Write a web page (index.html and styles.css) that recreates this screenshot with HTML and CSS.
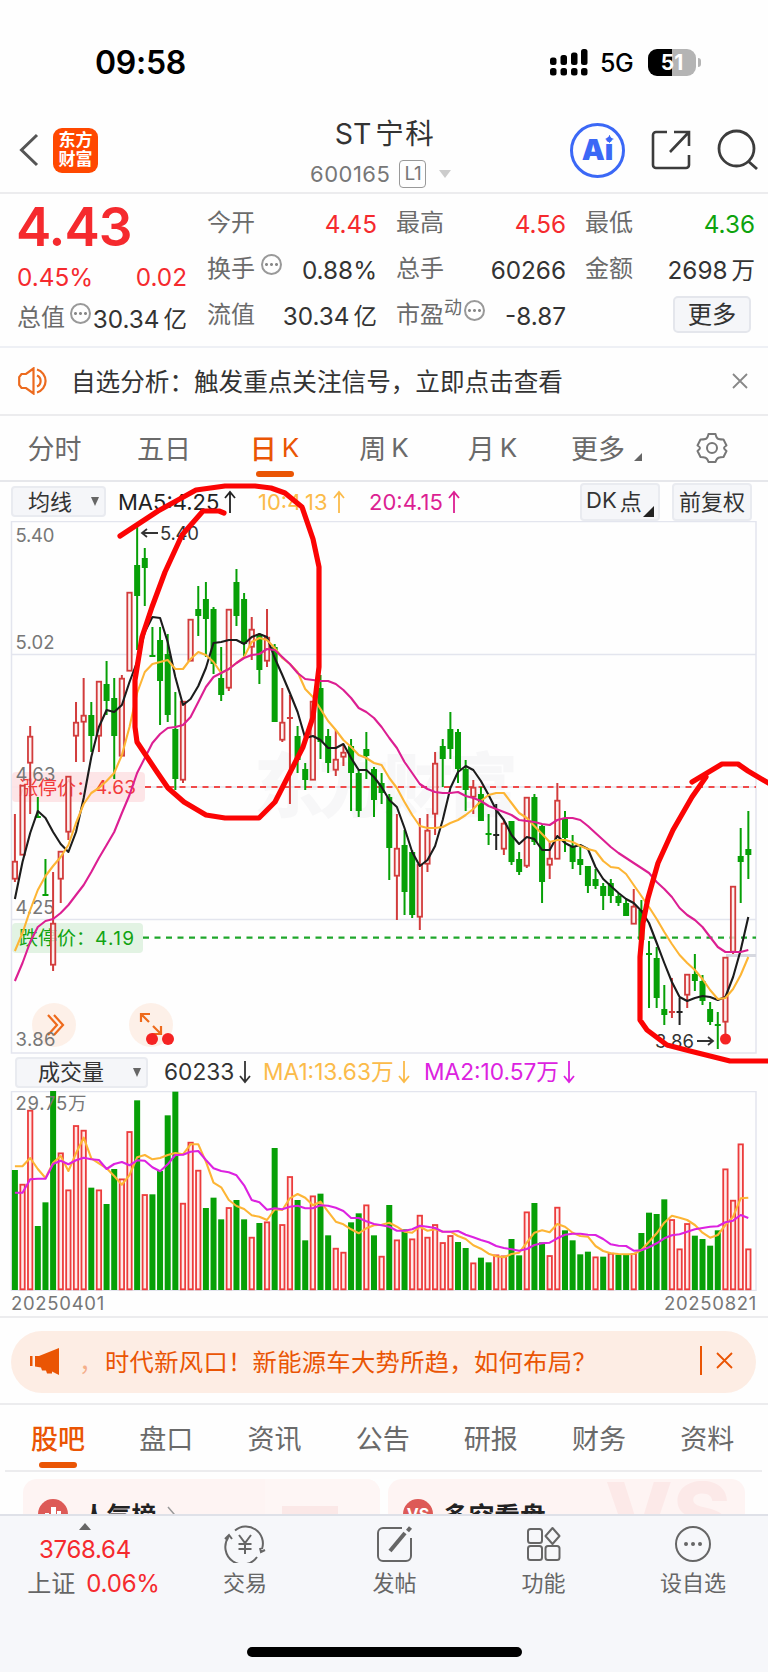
FILE: index.html
```html
<!DOCTYPE html>
<html lang="zh-CN">
<head>
    <meta charset="UTF-8">
    <meta name="viewport" content="width=device-width, initial-scale=1.0">
    <title>ST宁科 600165</title>
    <link rel="stylesheet" href="styles.css">
</head>
<body>
    <div class="status-bar">
        <span class="time">09:58</span>
        <div class="status-right">
            <svg class="signal" width="38" height="27" viewBox="0 0 38 27">
                <rect x="0" y="8.500" width="6.500" height="7.500" rx="2.500"/>
                <rect x="10.500" y="6" width="6.500" height="10" rx="2.500"/>
                <rect x="21" y="3.500" width="6.500" height="12.500" rx="2.500"/>
                <rect x="31" y="0" width="6.500" height="16" rx="2.500"/>
                <rect x="0" y="19" width="6.500" height="7.500" rx="2.500"/>
                <rect x="10.500" y="19" width="6.500" height="7.500" rx="2.500"/>
                <rect x="21" y="19" width="6.500" height="7.500" rx="2.500"/>
                <rect x="31" y="19" width="6.500" height="7.500" rx="2.500"/>
            </svg>
            <span class="network">5G</span>
            <span class="battery">51</span>
            <span class="battery-tip"></span>
        </div>
    </div>

    <header class="header">
        <div class="header-left">
            <svg width="20" height="34" viewBox="0 0 20 34" fill="none" stroke="#555" stroke-width="3">
                <path d="M18 2 2.500 17 18 32"/>
            </svg>
            <span class="logo">东方<br>财富</span>
        </div>
        <div class="header-title">
            <h1>ST<span class="cjk">宁科</span></h1>
            <div class="code">600165<span class="level">L1</span><span class="caret"></span></div>
        </div>
        <div class="header-right">
            <span class="ai">Ai<i></i></span>
            <svg width="40" height="40" viewBox="0 0 40 40" fill="none" stroke="#3c3c3c" stroke-width="2.600">
                <path d="M16 2H5a3 3 0 0 0-3 3v30a3 3 0 0 0 3 3h30a3 3 0 0 0 3-3V25M23 2h15v14M38 2 19 22"/>
            </svg>
            <svg width="42" height="42" viewBox="0 0 42 42" fill="none" stroke="#3c3c3c" stroke-width="2.800">
                <circle cx="19.500" cy="19.500" r="17.500"/><path d="M31 32l9 8"/>
            </svg>
        </div>
    </header>

    <section class="quote">
        <div class="quote-main">
            <div class="price">4.43</div>
            <div class="row red change"><span>0.45%</span><span>0.02</span></div>
            <div class="row"><label>总值<i class="info"></i></label><span>30.34<b>亿</b></span></div>
        </div>
        <div class="quote-grid">
            <div class="row"><label>今开</label><span class="red">4.45</span></div>
            <div class="row"><label>最高</label><span class="red">4.56</span></div>
            <div class="row"><label>最低</label><span class="green">4.36</span></div>
            <div class="row"><label>换手<i class="info wide"></i></label><span>0.88%</span></div>
            <div class="row"><label>总手</label><span>60266</span></div>
            <div class="row"><label>金额</label><span>2698<b>万</b></span></div>
            <div class="row"><label>流值</label><span>30.34<b>亿</b></span></div>
            <div class="row"><label>市盈<sup>动</sup><i class="info tight"></i></label><span>-8.87</span></div>
            <div class="row more"><button>更多</button></div>
        </div>
    </section>

    <section class="notice">
        <svg width="34" height="28" viewBox="0 0 34 28" fill="none" stroke="#ec6a1e" stroke-width="2.200">
            <path d="M15.500 1.500 8 7H3.500L1.200 10v8l2.300 3H8l7.500 5.500zM19 8.500a6 6 0 0 1 0 11M19 2.500a12 12 0 0 1 0 23"/>
        </svg>
        <p>自选分析：触发重点关注信号，立即点击查看</p>
        <svg class="close" width="16" height="16" viewBox="0 0 16 16" stroke="#888" stroke-width="1.800">
            <path d="M1 1l14 14M15 1 1 15"/>
        </svg>
    </section>

    <nav class="period-tabs">
        <a>分时</a>
        <a>五日</a>
        <a class="active">日<span>K</span></a>
        <a>周<span>K</span></a>
        <a>月<span>K</span></a>
        <a>更多<i class="corner"></i></a>
        <a>
            <svg width="32" height="32" viewBox="0 0 32 32" fill="none" stroke="#777" stroke-width="2">
                <path d="M12.500 2h7q1 4.500 3 5t5 .5l3 6q-2.500 1.500-2.500 2.500t2.500 3l-3 6q-3 0-5 .7t-3 4.300h-7q-1-3.600-3-4.300t-5-.7l-3-6q2.500-2 2.500-3t-2.500-2.500l3-6q3 0 5-.5t3-5z" stroke-linejoin="round"/>
                <circle cx="16" cy="16" r="5"/>
            </svg>
        </a>
    </nav>

    <div class="toolbar price-toolbar">
        <span class="select">均线<i></i></span>
        <span class="ma ma5">MA5:4.25<svg class="arrow"><use href="#up"/></svg></span>
        <span class="ma ma10">10:4.13<svg class="arrow"><use href="#up"/></svg></span>
        <span class="ma ma20">20:4.15<svg class="arrow"><use href="#up"/></svg></span>
        <span class="chip dk">DK<b>点</b><i class="corner"></i></span>
        <span class="chip">前复权</span>
    </div>

    <svg class="price-chart" width="768" height="533" viewBox="0 521 768 533">
        <defs>
            <symbol id="up" viewBox="0 0 12 24"><path d="M6 23V2M1 8l5-6 5 6" fill="none" stroke="currentColor" stroke-width="1.800"/></symbol>
            <symbol id="down" viewBox="0 0 12 24"><path d="M6 1v21M1 16l5 6 5-6" fill="none" stroke="currentColor" stroke-width="1.800"/></symbol>
        </defs>
        <text class="watermark" x="254" y="812" textLength="264">东方财富</text>
        <path class="grid" d="M11.500 521.500H756V1053H11.500zM11.500 654.500H756M11.500 787H756M11.500 919.500H756"/>
        <rect class="limit-up-bg" x="12" y="772" width="133" height="30" rx="4"/>
        <rect class="limit-down-bg" x="12" y="923" width="131" height="30" rx="4"/>
        <path class="dash red-line" d="M145 787H756"/>
        <path class="dash green-line" d="M143 937.700H756"/>
        <g class="axis">
            <text x="15.500" y="542" textLength="39">5.40</text>
            <text x="15.500" y="648.500" textLength="39">5.02</text>
            <text x="15.500" y="781" textLength="40">4.63</text>
            <text x="15.500" y="913.500" textLength="39">4.25</text>
        </g>
        <text class="limit up" x="19" y="794.500">涨停价：</text>
        <text class="limit up" x="95" y="794" textLength="41">4.63</text>
        <text class="limit down" x="19" y="945">跌停价：</text>
        <text class="limit down" x="95" y="945" textLength="39">4.19</text>
        <path d="M726 955.500H756" stroke="#d6d8e0" stroke-width="3"/>
        <g id="candles"></g>
        <g id="priceLines" class="lines"></g>
        <g class="mark">
            <text x="160" y="539.500" textLength="39">5.40</text>
            <path d="M158 533h-15M147 529l-5 4 5 4"/>
            <text x="655" y="1048" textLength="39">3.86</text>
            <path d="M697 1041h15M708 1037l5 4-5 4"/>
        </g>
        <circle class="round-bg" cx="54" cy="1025" r="22"/>
        <path class="round-icon" d="M48 1015l9 10-9 10M54 1015l9 10-9 10"/>
        <circle class="round-bg" cx="151" cy="1025" r="22"/>
        <path class="round-icon" d="M141 1022v-8h9M141 1014l8 8M153 1026l8 8M161 1026v8h-9"/>
        <circle class="dot" cx="152" cy="1039" r="6"/>
        <circle class="dot" cx="168" cy="1039" r="6"/>
        <circle class="dot" cx="725.500" cy="1039" r="5.500"/>
        <g class="axis"><text x="15.500" y="1046" textLength="40">3.86</text></g>
    </svg>

    <div class="toolbar volume-toolbar">
        <span class="select">成交量<i></i></span>
        <span class="ma">60233<svg class="arrow"><use href="#down"/></svg></span>
        <span class="ma vol1">MA1:13.63万<svg class="arrow"><use href="#down"/></svg></span>
        <span class="ma vol2">MA2:10.57万<svg class="arrow"><use href="#down"/></svg></span>
    </div>

    <svg class="volume-chart" width="768" height="200" viewBox="0 1091 768 200">
        <path class="grid" d="M11.500 1091.500H756V1290.500H11.500z"/>
        <g id="volumes"></g>
        <g class="axis"><text x="15.500" y="1110" textLength="71">29.75万</text></g>
        <g id="volumeLines" class="lines"></g>
    </svg>
    <div class="dates"><span>20250401</span><span>20250821</span></div>

    <section class="banner-wrap">
        <div class="banner">
            <svg width="30" height="27" viewBox="0 0 30 27" fill="#ea5504">
                <path d="M0 8h2.500v10H0zM5 8h4L29 0v27l-7-3.500v2h-5l-1-3h-4l-1-3-6-1z"/>
            </svg>
            <span class="tail">，</span>
            <p>时代新风口！新能源车大势所趋，如何布局？</p>
            <svg class="close" width="17" height="17" viewBox="0 0 17 17" stroke="#ea5504" stroke-width="1.800">
                <path d="M1 1l15 15M16 1 1 16"/>
            </svg>
        </div>
    </section>

    <nav class="info-tabs">
        <a class="active">股吧</a><a>盘口</a><a>资讯</a><a>公告</a><a>研报</a><a>财务</a><a>资料</a>
    </nav>

    <section class="cards">
        <div class="card">
            <span class="badge"><svg width="16" height="16" viewBox="0 0 16 16" fill="#fff"><path d="M0 7h4v9H0zM6 1h5v15H6zM12 5h4v11h-4z"/></svg></span>
            <b>人气榜</b>
            <svg width="8" height="16" viewBox="0 0 8 16" fill="none" stroke="#999" stroke-width="1.500"><path d="M1 1l6 7-6 7"/></svg>
            <i class="deco podium"></i>
        </div>
        <div class="card">
            <span class="badge">VS</span>
            <b class="wide">多空看盘</b>
            <i class="deco versus">VS</i>
        </div>
    </section>

    <footer class="bottom-bar">
        <div class="nav">
            <div class="index">
                <i></i>
                <strong>3768.64</strong>
                <p>上证<span>0.06%</span></p>
            </div>
            <div class="nav-item">
                <svg width="42" height="38" viewBox="0 0 42 38" fill="none" stroke="#666" stroke-width="2">
                    <path d="M11 5.500A17 17 0 0 1 38 24M33 32A17 17 0 0 1 4.500 12M1 14l4-4 3 4M41 25l-4 2-1-4M15 10l6 8 6-8M14.500 19h13M14.500 24h13M21 18v11"/>
                </svg>
                <span>交易</span>
            </div>
            <div class="nav-item">
                <svg width="36" height="38" viewBox="0 0 36 38" fill="none" stroke="#666" stroke-width="2">
                    <path d="M25 3H6a5 5 0 0 0-5 5v23a5 5 0 0 0 5 5h23a5 5 0 0 0 5-5V13"/>
                    <path d="M13 26l15-18" stroke-width="4"/><path d="M30.500 6l3-3.500" stroke-width="4"/>
                </svg>
                <span>发帖</span>
            </div>
            <div class="nav-item">
                <svg width="34" height="36" viewBox="0 0 34 36" fill="none" stroke="#666" stroke-width="2">
                    <rect x="1" y="3" width="14" height="14" rx="2.500"/>
                    <rect x="1" y="20" width="14" height="14" rx="2.500"/>
                    <rect x="18.500" y="20" width="14" height="14" rx="2.500"/>
                    <path d="M25.500 2l7 8-7 8-7-8z" stroke-linejoin="round"/>
                </svg>
                <span>功能</span>
            </div>
            <div class="nav-item">
                <svg width="38" height="38" viewBox="0 0 38 38" fill="none" stroke="#666" stroke-width="2">
                    <circle cx="19" cy="19" r="17"/>
                    <path d="M12 19h.01M19 19h.01M26 19h.01" stroke-width="4" stroke-linecap="round"/>
                </svg>
                <span>设自选</span>
            </div>
        </div>
        <div class="home-indicator"></div>
    </footer>

    <svg class="doodle" width="768" height="1672" viewBox="0 0 768 1672">
        <path d="M120 536 158 511 196 490 225 486H255L271 488 285 493 302 507 313 539 319 567V667L313 717 303 747 275 802 259 818H225L206 815 184 802 168 788 157 772 137 742 135 727V680L142 637 152 607 165 572 182 535 203 511H219L224 513"/>
        <path d="M692 782 722 764H738L748 771 770 784M706 777 692 797 673 830 658 863 648 898 643 923 640 957V1020L647 1030 667 1045 690 1051 730 1061H770"/>
    </svg>

    <script src="chart.js"></script>
</body>
</html>
```
FILE: chart.js
```js
const START = 14.9;
const STEP = 7.64;
const x = i => START + i * STEP;

const RED = '#d23c3c';
const GREEN = '#07a007';
const BLACK = '#222';

// [type, high, low, bodyTop, bodyBottom]
const candles = [
    ['r', 814, 882, 861, 879], ['r', 785, 855, 785, 855], ['r', 726, 814, 736, 763], ['g', 797, 818, 817, 818],
    ['g', 859, 896, 895, 896], ['r', 872, 971, 923, 965], ['r', 851, 903, 851, 879], ['r', 776, 840, 776, 832],
    ['r', 702, 762, 722, 736], ['r', 678, 762, 715, 722], ['g', 702, 752, 715, 736], ['r', 681, 752, 681, 736],
    ['g', 661, 715, 684, 701], ['g', 678, 779, 698, 736], ['r', 675, 756, 678, 756], ['r', 592, 671, 592, 671],
    ['g', 525, 650, 565, 596], ['g', 548, 606, 558, 568], ['g', 627, 657, 656, 657], ['g', 627, 725, 640, 681],
    ['g', 634, 722, 654, 715], ['g', 692, 790, 729, 779], ['r', 701, 783, 701, 780], ['r', 619, 661, 619, 661],
    ['g', 586, 636, 609, 616], ['g', 582, 657, 599, 619], ['g', 607, 674, 609, 664], ['g', 647, 701, 678, 695],
    ['r', 609, 691, 609, 688], ['g', 569, 626, 582, 616], ['g', 593, 656, 599, 644], ['r', 617, 660, 629, 647],
    ['g', 633, 684, 634, 670], ['r', 609, 667, 637, 661], ['g', 644, 722, 647, 722], ['r', 688, 742, 722, 740],
    ['r', 695, 804, 718, 719], ['g', 726, 773, 736, 760], ['g', 763, 790, 769, 780], ['r', 701, 780, 701, 780],
    ['g', 675, 759, 688, 742], ['g', 729, 773, 736, 763], ['r', 730, 776, 759, 770], ['r', 745, 766, 752, 757],
    ['g', 739, 811, 746, 773], ['g', 770, 817, 773, 811], ['g', 732, 779, 749, 756], ['g', 767, 817, 769, 800],
    ['g', 773, 804, 783, 793], ['g', 794, 880, 797, 848], ['r', 814, 920, 848, 876], ['g', 830, 915, 845, 892],
    ['g', 850, 918, 852, 915], ['r', 818, 930, 864, 917], ['r', 814, 872, 830, 864], ['r', 752, 835, 763, 814],
    ['g', 739, 787, 746, 759], ['g', 712, 759, 729, 749], ['g', 729, 783, 732, 769], ['g', 760, 811, 769, 790],
    ['r', 780, 814, 787, 797], ['g', 787, 821, 794, 821], ['g', 814, 845, 834, 835], ['k', 804, 850, 835, 836],
    ['r', 820, 855, 823, 849], ['g', 821, 865, 821, 862], ['g', 852, 875, 859, 872], ['r', 797, 868, 797, 866],
    ['g', 794, 845, 797, 842], ['g', 825, 903, 826, 882], ['r', 842, 879, 858, 865], ['r', 783, 859, 800, 859],
    ['g', 811, 852, 818, 838], ['g', 835, 869, 847, 862], ['g', 845, 875, 859, 865], ['g', 866, 893, 866, 886],
    ['g', 869, 889, 879, 886], ['g', 883, 910, 886, 896], ['g', 879, 903, 883, 896], ['g', 893, 906, 896, 903],
    ['g', 899, 916, 903, 916], ['r', 889, 924, 906, 924], ['g', 900, 940, 910, 940], ['g', 941, 1008, 954, 955],
    ['g', 947, 1008, 958, 998], ['g', 985, 1025, 1009, 1015], ['r', 978, 1018, 1012, 1013], ['k', 998, 1025, 1012, 1013],
    ['r', 974, 1008, 974, 995], ['g', 954, 991, 974, 981], ['g', 975, 1005, 981, 1001], ['g', 1002, 1025, 1009, 1022],
    ['g', 1012, 1049, 1025, 1026], ['r', 957, 1037, 957, 1022], ['r', 886, 954, 886, 952], ['g', 828, 903, 856, 862],
    ['g', 811, 879, 849, 855]
];

const ma5 = [899, 862, 833, 811, 818, 832, 844, 852, 832, 798, 757, 727, 710, 712, 705, 682, 662, 632, 617, 618,
    642, 677, 705, 699, 686, 668, 643, 642, 640, 640, 644, 637, 634, 637, 658, 675, 693, 712, 738, 736,
    740, 748, 748, 744, 758, 770, 770, 777, 787, 800, 807, 828, 852, 866, 860, 846, 820, 788, 772, 766,
    770, 781, 795, 810, 820, 835, 844, 837, 839, 850, 850, 836, 843, 847, 845, 849, 867, 879, 886, 893,
    899, 903, 911, 923, 943, 963, 982, 997, 1001, 998, 996, 997, 1000, 997, 977, 950, 917];

const ma10 = [951, 933, 910, 890, 876, 866, 857, 845, 823, 804, 793, 788, 781, 773, 755, 727, 693, 672, 664, 662,
    660, 669, 669, 659, 652, 655, 662, 673, 669, 663, 657, 642, 638, 640, 648, 658, 664, 672, 689, 697,
    709, 721, 730, 740, 747, 755, 758, 763, 765, 778, 788, 802, 815, 826, 828, 828, 827, 823, 820, 815,
    809, 801, 795, 793, 793, 803, 813, 818, 826, 834, 842, 840, 840, 842, 846, 849, 851, 861, 867, 868,
    874, 885, 896, 907, 919, 932, 944, 955, 963, 970, 979, 990, 999, 998, 989, 975, 957];

const ma20 = [981, 963, 942, 927, 921, 919, 913, 905, 895, 885, 872, 858, 845, 832, 813, 795, 773, 758, 743, 734,
    728, 727, 725, 717, 702, 687, 677, 673, 669, 663, 658, 655, 654, 649, 650, 657, 664, 673, 679, 680,
    681, 681, 684, 690, 698, 708, 712, 718, 727, 738, 748, 762, 773, 784, 789, 792, 793, 793, 792, 796,
    798, 801, 806, 809, 812, 815, 820, 821, 822, 824, 825, 820, 818, 818, 820, 826, 833, 840, 847, 853,
    858, 863, 868, 873, 882, 889, 897, 908, 915, 920, 927, 937, 947, 952, 952, 952, 950];

const BASE = 720;
const volY = v => 1050 + v / 3;

const volumes = 'g360 r402 r180 g528 g457 g123 r308 r419 r226 r240 g413 r419 g462 g357 r386 r244 g151 r433 g433 g363 ' +
    'g196 g125 r459 r276 r360 g474 g443 g508 r472 g450 g508 r561 g519 r515 g294 r523 r379 g450 g571 r437 ' +
    'g431 g556 r594 r606 g517 g490 r464 g556 r618 g465 r569 g538 r566 r495 r561 r523 r577 r556 g576 g594 ' +
    'r638 g623 g637 r614 r617 g567 g616 r485 g459 g577 r616 r471 g541 g571 g613 g605 r620 g620 r609 g614 ' +
    'g614 r610 g549 g488 g492 g448 r508 r596 r520 g557 g567 g587 g541 r356 r450 r281 r596';

const volMa1 = [349, 349, 324, 357, 384, 338, 318, 363, 310, 263, 325, 340, 355, 378, 404, 375, 322, 315, 328, 324,
    315, 309, 313, 283, 283, 335, 398, 412, 450, 468, 477, 496, 500, 510, 478, 480, 445, 432, 443, 466,
    455, 485, 515, 523, 538, 550, 535, 526, 524, 518, 530, 545, 548, 530, 542, 538, 545, 545, 558, 567,
    586, 596, 611, 619, 622, 612, 608, 578, 548, 541, 547, 522, 530, 548, 558, 560, 588, 603, 610, 612,
    613, 612, 600, 575, 550, 518, 497, 503, 510, 525, 548, 563, 555, 525, 500, 445, 443];

const volMa2 = [428, 428, 388, 386, 386, 342, 332, 343, 331, 323, 328, 330, 357, 342, 336, 346, 331, 332, 352, 364,
    343, 315, 314, 305, 303, 330, 355, 363, 367, 376, 406, 450, 457, 479, 475, 478, 470, 467, 475, 475,
    466, 467, 473, 483, 504, 504, 514, 522, 526, 530, 542, 542, 538, 527, 530, 534, 545, 545, 543, 554,
    562, 570, 577, 588, 594, 598, 602, 597, 585, 580, 578, 565, 554, 551, 551, 554, 555, 567, 583, 587,
    588, 602, 601, 592, 580, 565, 556, 553, 545, 538, 534, 530, 529, 517, 512, 495, 504];

function line(values, color, map = v => v) {
    const points = values.map((v, i) => `${x(i).toFixed(1)},${map(v).toFixed(1)}`).join(' ');
    return `<polyline points="${points}" stroke="${color}"/>`;
}

function drawCandle([type, high, low, top, bottom], i) {
    const color = type === 'r' ? RED : type === 'g' ? GREEN : BLACK;
    const cx = x(i);
    if (bottom - top < 2) {
        return `<path d="M${cx} ${high}V${low}M${cx - 3} ${top}h6" stroke="${color}" stroke-width="2"/>`;
    }
    if (type === 'r') {
        return `<path d="M${cx} ${high}V${top}M${cx} ${bottom}V${low}" stroke="${color}" stroke-width="2"/>` +
            `<rect x="${cx - 2.2}" y="${top + 0.7}" width="4.4" height="${bottom - top - 1}" fill="#fdeeee" fill-opacity="0.8" stroke="${color}" stroke-width="1.8"/>`;
    }
    return `<path d="M${cx} ${high}V${low}" stroke="${color}" stroke-width="2"/>` +
        `<rect x="${cx - 3}" y="${top}" width="6" height="${bottom - top}" fill="${color}"/>`;
}

function drawVolume(item, i) {
    const top = volY(Number(item.slice(1)));
    const height = volY(BASE) - top;
    if (item[0] === 'g') {
        return `<rect x="${x(i) - 3}" y="${top}" width="6" height="${height}" fill="${GREEN}"/>`;
    }
    return `<rect x="${x(i) - 2.2}" y="${top + 0.7}" width="4.4" height="${height - 1.4}" fill="#ffeaea" stroke="#ec3c3c" stroke-width="1.8"/>`;
}

document.getElementById('candles').innerHTML = candles.map(drawCandle).join('');
document.getElementById('priceLines').innerHTML =
    line(ma5, '#1c1c1c') + line(ma10, '#fdb535') + line(ma20, '#dc1f92');
document.getElementById('volumes').innerHTML = volumes.split(' ').map(drawVolume).join('');
document.getElementById('volumeLines').innerHTML =
    line(volMa1, '#fdb535', volY) + line(volMa2, '#dc22e0', volY);
```
FILE: styles.css
```css
* {
    box-sizing: border-box;
}
body {
    margin: 0;
    width: 768px;
    height: 1672px;
    position: relative;
    overflow: hidden;
    background: #fefefe;
    color: #333;
    font-family: Inter, "Noto Sans CJK SC", sans-serif;
}
h1, p {
    margin: 0;
}
svg {
    display: block;
    flex: none;
}
b, i {
    font-weight: inherit;
    font-style: normal;
}
.red {
    color: #f52a2e;
}
.green {
    color: #0ea30e;
}

/* status bar */
.status-bar {
    height: 110px;
    padding: 15px 67px 0 95px;
    display: flex;
    align-items: center;
    justify-content: space-between;
    color: #000;
}
.time {
    font-size: 32px;
    font-weight: 600;
    letter-spacing: -0.3px;
}
.status-right {
    display: flex;
    align-items: center;
}
.network {
    margin-left: 12px;
    width: 48px;
    font-size: 25px;
    font-weight: 500;
    letter-spacing: -0.5px;
}
.battery {
    width: 48px;
    height: 27px;
    border-radius: 9px;
    background: linear-gradient(90deg, #000 51%, #b4b4b4 51%);
    color: #fff;
    font-size: 21px;
    font-weight: 700;
    line-height: 27px;
    text-align: center;
}
.battery-tip {
    width: 3px;
    height: 9px;
    margin-left: 2px;
    border-radius: 0 3px 3px 0;
    background: #b4b4b4;
}

/* header */
.header {
    height: 84px;
    padding: 0 9px 0 19px;
    display: grid;
    grid-template-columns: 1fr 200px 1fr;
    border-bottom: 2px solid #ececee;
}
.header-left,
.header-right {
    display: flex;
    align-items: center;
    height: 80px;
}
.header-left {
    gap: 14px;
}
.header-right {
    justify-content: flex-end;
    gap: 26px;
}
.logo {
    width: 45px;
    height: 45px;
    padding-top: 3px;
    border-radius: 9px;
    background: #ff4800;
    color: #fff;
    font-size: 17px;
    font-weight: 700;
    line-height: 19px;
    text-align: center;
}
.header-title {
    text-align: center;
    margin-left: -8px;
}
.header-title h1 {
    margin-top: 4px;
    font-size: 28.5px;
    font-weight: 400;
    line-height: 40px;
}
.cjk {
    margin-left: 4px;
    letter-spacing: 1.5px;
}
.code {
    display: flex;
    align-items: center;
    height: 40px;
    margin-left: 29px;
    color: #777;
    font-size: 22px;
    letter-spacing: 0.5px;
}
.level {
    width: 27px;
    height: 28px;
    margin: 0 13px 0 9px;
    border: 1.5px solid #999;
    border-radius: 4px;
    font-size: 19px;
    line-height: 26px;
    letter-spacing: -0.5px;
}
.caret {
    border: 6.5px solid transparent;
    border-top: 8px solid #ccc;
    border-bottom: 0;
}
.ai {
    position: relative;
    width: 55px;
    height: 55px;
    border: 3px solid #3b68f6;
    border-radius: 50%;
    color: #3b68f6;
    font-size: 29px;
    font-weight: 900;
    line-height: 48px;
    text-align: center;
}
.ai i {
    position: absolute;
    right: 8px;
    top: 9px;
    width: 9px;
    height: 9px;
    background: #3b68f6;
    clip-path: polygon(50% 0, 65% 35%, 100% 50%, 65% 65%, 50% 100%, 35% 65%, 0 50%, 35% 35%);
}

/* quote */
.quote {
    display: flex;
    height: 154px;
    padding: 7px 12px 0 17px;
    border-bottom: 2px solid #eef0f5;
    font-size: 24.3px;
}
.quote-main {
    width: 170px;
    margin-right: 20px;
}
.price {
    height: 52px;
    margin-left: -1px;
    color: #f52a2e;
    font-size: 53px;
    font-weight: 600;
    line-height: 52px;
    letter-spacing: -1px;
}
.row {
    display: flex;
    align-items: center;
    justify-content: space-between;
    height: 46px;
    line-height: 30px;
    white-space: nowrap;
}
.quote-main .row {
    height: 38px;
}
.quote-main .change {
    height: 47px;
}
.row b {
    margin-left: 4px;
    font-size: 23.5px;
}
.row label {
    display: flex;
    align-items: center;
    margin-top: -3px;
    color: #6b6b6b;
    font-size: 24px;
}
.quote-grid {
    display: grid;
    grid-template-columns: 170px 170px 170px;
    column-gap: 19px;
    align-content: start;
}
.info {
    width: 21px;
    height: 21px;
    margin: -8px 0 0 5px;
    border: 2px solid #999;
    border-radius: 50%;
    background: radial-gradient(circle, #888 1.2px, transparent 1.7px) center / 5px 5px repeat-x;
}
.info.wide {
    margin-left: 6px;
}
.info.tight {
    margin-left: 2px;
}
.row sup {
    margin-top: -14px;
    font-size: 18px;
    line-height: 18px;
}
.row.more {
    justify-content: flex-end;
}
.more button {
    width: 78px;
    height: 37px;
    margin: -4px 4px 0 0;
    padding: 0;
    border: 2px solid #e4e6ec;
    border-radius: 5px;
    background: #f5f6f9;
    color: #333;
    font: inherit;
    line-height: 32px;
}

/* notice */
.notice {
    display: flex;
    align-items: center;
    height: 68px;
    padding: 0 20px 0 18px;
    border-bottom: 2px solid #ececee;
}
.notice p {
    margin: -2px auto 0 19px;
    font-size: 24.6px;
}

/* tabs */
.period-tabs {
    display: grid;
    grid-template-columns: 109px 110px 111px 108px 109px 109px 112px;
    height: 66px;
    border-bottom: 2px solid #e6e7eb;
    color: #6a6a6a;
    font-size: 27px;
}
.period-tabs a {
    position: relative;
    display: flex;
    align-items: center;
    justify-content: center;
    padding-bottom: 1px;
}
.period-tabs span {
    margin-left: 5px;
    font-size: 26px;
    font-weight: 400;
}
.active {
    color: #ea5504;
    font-weight: 500;
}
.active::after {
    content: "";
    position: absolute;
    left: 50%;
    bottom: 3px;
    width: 38px;
    height: 6px;
    margin-left: -19px;
    border-radius: 3px;
    background: #ea5504;
}
.corner {
    border-left: 8px solid transparent;
    border-bottom: 8px solid #666;
}
.period-tabs .corner {
    margin: 18px -10px 0 9px;
}

/* toolbars */
.toolbar {
    display: flex;
    align-items: center;
    height: 39px;
    font-size: 22px;
    white-space: nowrap;
}
.price-toolbar {
    padding: 0 16px 0 11px;
}
.select {
    display: flex;
    align-items: center;
    justify-content: space-between;
    width: 95px;
    height: 31px;
    padding: 0 5px 0 15px;
    border: 2px solid #e9ebf0;
    border-radius: 4px;
    background: #f5f6f9;
    line-height: 24px;
}
.select i {
    border: 4.5px solid transparent;
    border-top: 9px solid #666;
    border-bottom: 0;
}
.ma {
    display: flex;
    align-items: center;
    line-height: 28px;
}
.arrow {
    width: 12px;
    height: 24px;
    margin-left: 5px;
}
.ma5 {
    width: 140px;
    margin-left: 12px;
    color: #222;
}
.ma10 {
    width: 111px;
    color: #fbbb4a;
}
.ma20 {
    color: #dc1f92;
}
.chip {
    display: flex;
    align-items: center;
    justify-content: center;
    width: 80px;
    height: 38px;
    padding-bottom: 3px;
    border: 2px solid #e9ebf0;
    border-radius: 4px;
    background: #f5f6f9;
}
.dk {
    position: relative;
    justify-content: flex-start;
    padding-left: 4px;
    margin: 0 12px 0 auto;
}
.dk b {
    margin-left: 3px;
}
.dk .corner {
    position: absolute;
    right: 4px;
    bottom: 2px;
    border-left-width: 11px;
    border-bottom: 11px solid #222;
}
.volume-toolbar {
    height: 37px;
    padding-left: 15px;
    padding-bottom: 1px;
    font-size: 22.700px;
}
.volume-toolbar .select {
    width: 133px;
    padding-left: 21px;
    margin-right: 16px;
    font-size: 22px;
}
.volume-toolbar .ma {
    width: 99px;
}
.volume-toolbar .vol1 {
    width: 161px;
    color: #fbbb4a;
}
.volume-toolbar .vol2 {
    width: auto;
    color: #dc22e0;
}
.vol1 .arrow,
.vol2 .arrow {
    margin-left: 4px;
}

/* charts */
.grid {
    fill: none;
    stroke: #e3e5ee;
    stroke-width: 1.5;
}
.axis text {
    fill: #777;
    font-size: 18.5px;
}
.watermark {
    fill: #f7f7f8;
    font-size: 70px;
    font-weight: 900;
}
.limit-up-bg {
    fill: #fde2e4;
    opacity: 0.9;
}
.limit-down-bg {
    fill: #e2f3e3;
}
.dash {
    stroke-width: 2.2;
    stroke-dasharray: 6 5.5;
}
.red-line {
    stroke: #f04a4a;
}
.green-line {
    stroke: #1fa62b;
}
.limit {
    font-size: 19px;
}
.up {
    fill: #f23b3b;
}
.down {
    fill: #12a312;
}
.lines {
    fill: none;
    stroke-width: 2.1;
    stroke-linejoin: round;
}
.mark text {
    fill: #333;
    font-size: 18.5px;
}
.mark path {
    fill: none;
    stroke: #333;
    stroke-width: 1.8;
}
.round-bg {
    fill: #fdeee5;
    opacity: 0.9;
}
.round-icon {
    fill: none;
    stroke: #ee6a1c;
    stroke-width: 2.2;
}
.dot {
    fill: #f52323;
}
.dates {
    display: flex;
    justify-content: space-between;
    height: 27px;
    padding: 0 11px 0 11px;
    border-bottom: 2px solid #ececee;
    color: #777;
    font-size: 18.5px;
    line-height: 25px;
    letter-spacing: 0.7px;
}

/* banner */
.banner-wrap {
    height: 87px;
    padding: 13px 12px 0 11px;
    border-bottom: 2px solid #ececee;
}
.banner {
    display: flex;
    align-items: center;
    height: 62px;
    padding: 0 23px 0 19px;
    border-radius: 31px;
    background: #fdede4;
    color: #ea5504;
    font-size: 24.3px;
}
.banner svg:first-child {
    margin-top: -2px;
}
.tail {
    width: 24px;
    margin: -3px 0 0 19px;
    opacity: 0.4;
}
.banner p {
    margin: -3px 0 0 2px;
    letter-spacing: 0.3px;
}
.banner .close {
    box-sizing: content-box;
    height: 17px;
    margin: -3px 0 0 auto;
    padding: 6px 0 6px 14px;
    border-left: 2px solid #ea5504;
}

/* info tabs */
.info-tabs {
    display: grid;
    grid-template-columns: repeat(7, 108.2px);
    height: 67px;
    padding-left: 4px;
    font-size: 27px;
    color: #6a6a6a;
    background: linear-gradient(#ececee, #ececee) 5px 100% / 757px 2px no-repeat;
}
.info-tabs a {
    position: relative;
    display: flex;
    align-items: center;
    justify-content: center;
    padding-bottom: 2px;
}
.info-tabs .active::after {
    bottom: 4px;
}

.cards {
    display: grid;
    grid-template-columns: 357px 357px;
    gap: 8px;
    height: 42px;
    padding: 7px 0 0 23px;
    overflow: hidden;
}
.card {
    position: relative;
    display: flex;
    align-items: center;
    height: 70px;
    padding: 0 15px;
    border-radius: 14px;
    background: #fef4f3;
    color: #222;
    font-size: 24.7px;
    overflow: hidden;
}
.card b {
    margin: 0 11px 0 14px;
    font-weight: 600;
}
.card .wide {
    margin-left: 10px;
    font-size: 25.7px;
}
.badge {
    display: flex;
    align-items: center;
    justify-content: center;
    width: 30px;
    height: 30px;
    border-radius: 50%;
    background: #dd5a57;
    color: #fff;
    font-size: 16px;
    font-weight: 700;
}
.deco {
    position: absolute;
    right: 0;
    top: 0;
    color: #fce9e8;
}
.podium {
    width: 115px;
    height: 70px;
    background: linear-gradient(#fbe8e7, #fbe8e7) 17px 27px / 56px 43px no-repeat, #fef6f5;
}
.versus {
    width: 140px;
    font-size: 88px;
    font-weight: 800;
    line-height: 70px;
}

/* bottom bar */
.bottom-bar {
    height: 158px;
    border-top: 2px solid #dfe1e8;
    background: #f6f7fa;
}
.nav {
    display: grid;
    grid-template-columns: 170px 150px 149px 149px 150px;
    height: 131px;
}
.index {
    display: flex;
    flex-direction: column;
    align-items: center;
    padding-top: 7px;
    color: #f52a2e;
    font-size: 24px;
}
.index i {
    border: 6.5px solid transparent;
    border-top: 0;
    border-bottom: 7px solid #666;
}
.index strong {
    margin-top: 3px;
    font-weight: 400;
    line-height: 34px;
    letter-spacing: -0.3px;
}
.index p {
    margin-left: 17px;
    color: #666;
    font-size: 24px;
    line-height: 34px;
}
.index p span {
    margin-left: 11px;
    color: #f52a2e;
    letter-spacing: -0.2px;
}
.nav-item {
    display: flex;
    flex-direction: column;
    align-items: center;
    padding-top: 9px;
    color: #666;
    font-size: 22px;
}
.nav-item svg {
    height: 38px;
}
.nav-item span {
    margin-top: 4px;
    line-height: 32px;
}
.home-indicator {
    width: 275px;
    height: 10px;
    margin: 0 auto;
    border-radius: 5px;
    background: #000;
}

/* hand-drawn circles over the chart */
.doodle {
    position: absolute;
    left: 0;
    top: 0;
    fill: none;
    stroke: #fb0404;
    stroke-width: 5.2;
    stroke-linecap: round;
    stroke-linejoin: round;
    pointer-events: none;
}
```
